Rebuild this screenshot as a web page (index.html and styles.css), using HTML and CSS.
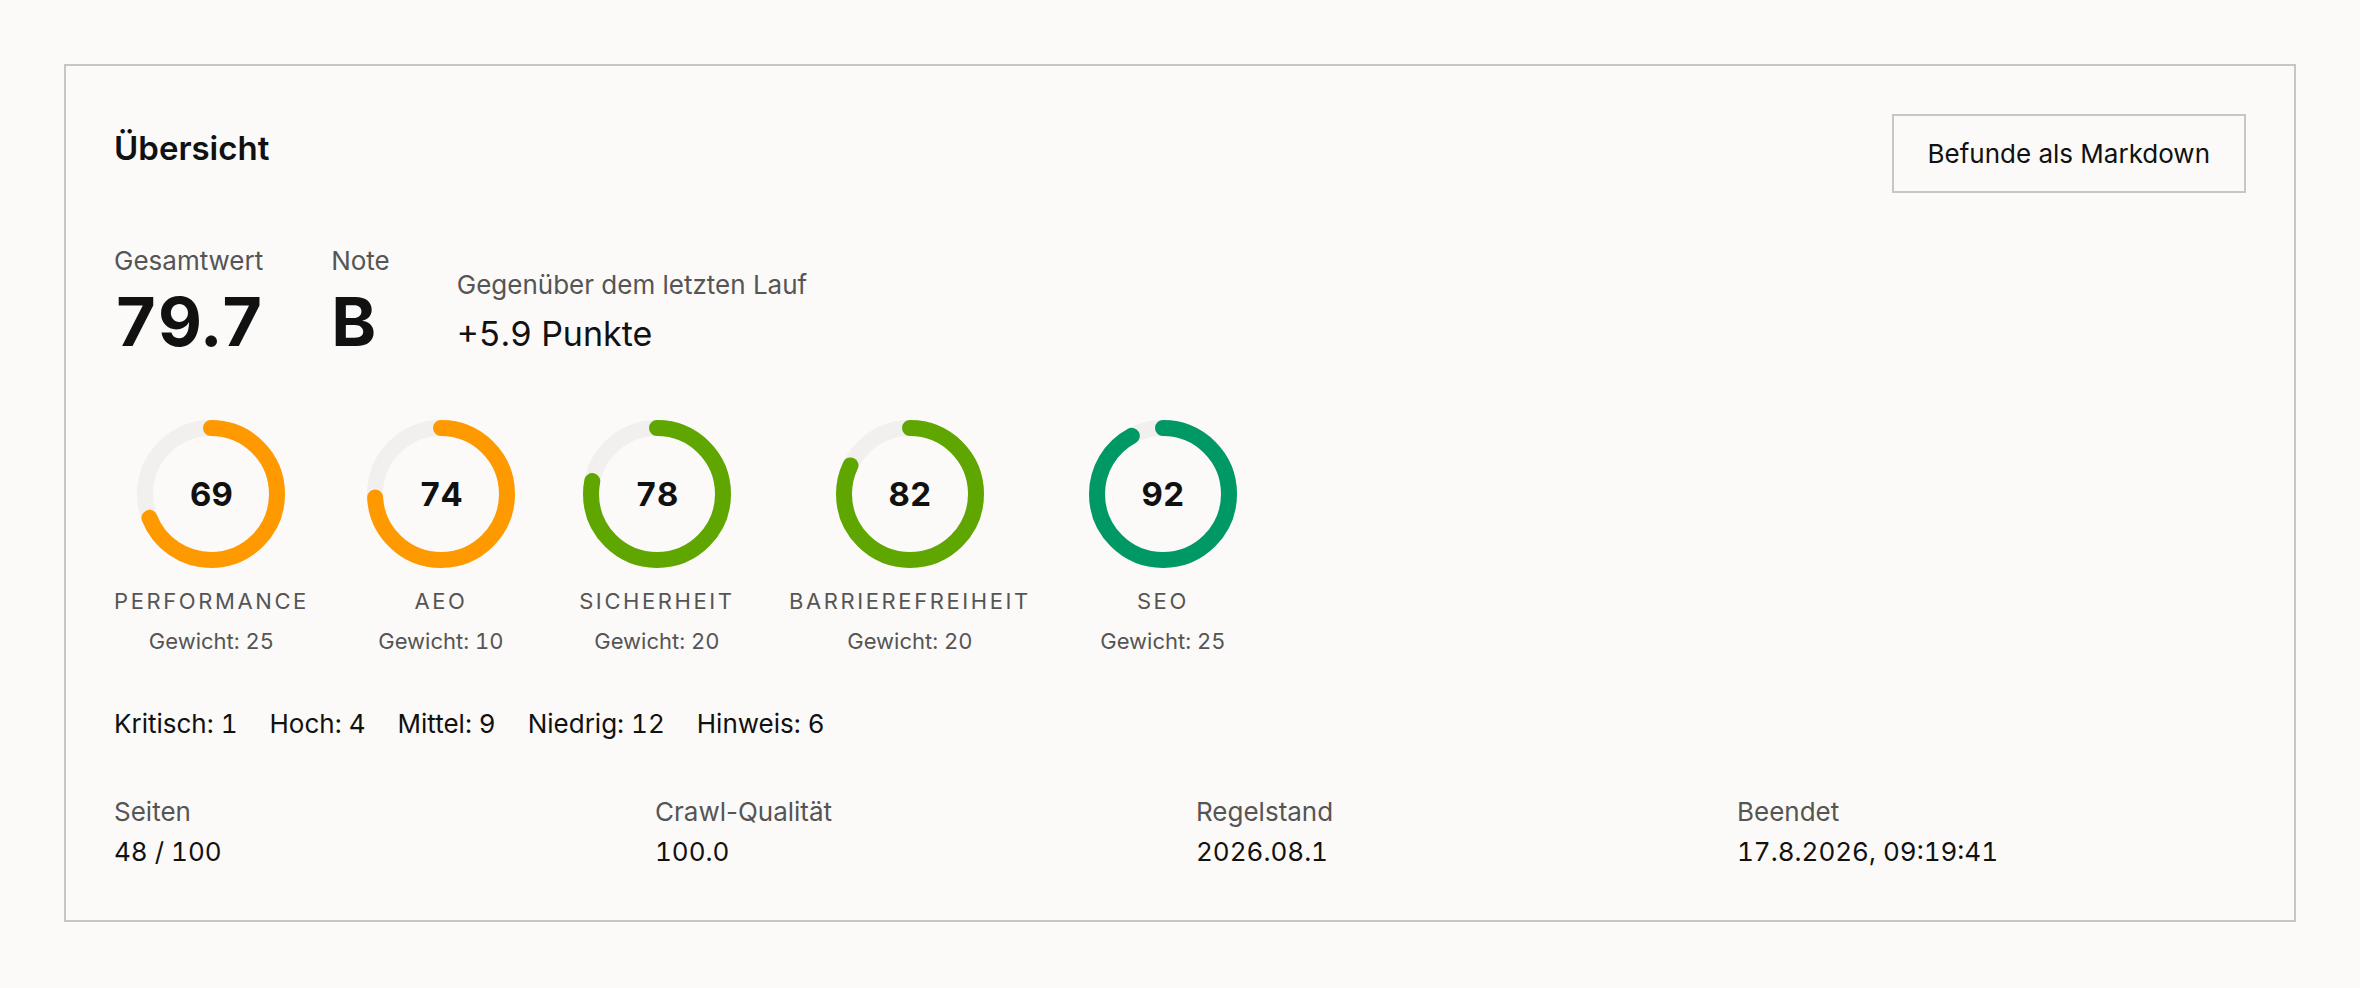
FILE: index.html
```html
<!DOCTYPE html>
<html lang="de">
<head>
    <meta charset="UTF-8">
    <meta name="viewport" content="width=device-width, initial-scale=1.0">
    <title>Übersicht</title>
    <link rel="stylesheet" href="styles.css">
</head>
<body>
    <section class="overview">
        <div class="overview-header">
            <h2 class="overview-title">Übersicht</h2>
            <button class="export-button">Befunde als Markdown</button>
        </div>

        <div class="score-row">
            <div class="score-col">
                <span class="score-label">Gesamtwert</span>
                <span class="score-value">79.7</span>
            </div>
            <div class="score-col">
                <span class="score-label">Note</span>
                <span class="score-value">B</span>
            </div>
            <div class="score-col delta">
                <span class="score-label">Gegenüber dem letzten Lauf</span>
                <span class="delta-value">+5.9 Punkte</span>
            </div>
        </div>

        <div class="gauges">
            <div class="gauge">
                <div class="gauge-ring">
                    <svg viewBox="0 0 148 148">
                        <circle class="track" cx="74" cy="74" r="66"></circle>
                        <circle class="bar orange" cx="74" cy="74" r="66" stroke-dasharray="286.1 414.7"></circle>
                    </svg>
                    <span class="gauge-value">69</span>
                </div>
                <span class="gauge-label">Performance</span>
                <span class="gauge-weight">Gewicht: 25</span>
            </div>
            <div class="gauge">
                <div class="gauge-ring">
                    <svg viewBox="0 0 148 148">
                        <circle class="track" cx="74" cy="74" r="66"></circle>
                        <circle class="bar orange" cx="74" cy="74" r="66" stroke-dasharray="306.9 414.7"></circle>
                    </svg>
                    <span class="gauge-value">74</span>
                </div>
                <span class="gauge-label">AEO</span>
                <span class="gauge-weight">Gewicht: 10</span>
            </div>
            <div class="gauge">
                <div class="gauge-ring">
                    <svg viewBox="0 0 148 148">
                        <circle class="track" cx="74" cy="74" r="66"></circle>
                        <circle class="bar green" cx="74" cy="74" r="66" stroke-dasharray="323.5 414.7"></circle>
                    </svg>
                    <span class="gauge-value">78</span>
                </div>
                <span class="gauge-label">Sicherheit</span>
                <span class="gauge-weight">Gewicht: 20</span>
            </div>
            <div class="gauge">
                <div class="gauge-ring">
                    <svg viewBox="0 0 148 148">
                        <circle class="track" cx="74" cy="74" r="66"></circle>
                        <circle class="bar green" cx="74" cy="74" r="66" stroke-dasharray="340.1 414.7"></circle>
                    </svg>
                    <span class="gauge-value">82</span>
                </div>
                <span class="gauge-label">Barrierefreiheit</span>
                <span class="gauge-weight">Gewicht: 20</span>
            </div>
            <div class="gauge">
                <div class="gauge-ring">
                    <svg viewBox="0 0 148 148">
                        <circle class="track" cx="74" cy="74" r="66"></circle>
                        <circle class="bar teal" cx="74" cy="74" r="66" stroke-dasharray="381.5 414.7"></circle>
                    </svg>
                    <span class="gauge-value">92</span>
                </div>
                <span class="gauge-label">SEO</span>
                <span class="gauge-weight">Gewicht: 25</span>
            </div>
        </div>

        <div class="severity">
            <span>Kritisch: 1</span>
            <span>Hoch: 4</span>
            <span>Mittel: 9</span>
            <span>Niedrig: 12</span>
            <span>Hinweis: 6</span>
        </div>

        <div class="meta">
            <div class="meta-item">
                <span class="meta-label">Seiten</span>
                <span class="meta-value">48 / 100</span>
            </div>
            <div class="meta-item">
                <span class="meta-label">Crawl-Qualität</span>
                <span class="meta-value">100.0</span>
            </div>
            <div class="meta-item">
                <span class="meta-label">Regelstand</span>
                <span class="meta-value">2026.08.1</span>
            </div>
            <div class="meta-item">
                <span class="meta-label">Beendet</span>
                <span class="meta-value">17.8.2026, 09:19:41</span>
            </div>
        </div>
    </section>
</body>
</html>
```

FILE: styles.css
```css
body {
    font-family: Inter, 'Liberation Sans', sans-serif;
    margin: 0;
    padding: 64px;
    background-color: #fbfaf8;
    color: #111;
}

.overview {
    border: 2px solid #c6c6c4;
    padding: 48px 48px 52px;
}

.overview-header {
    display: flex;
    justify-content: space-between;
    align-items: center;
}

.overview-title {
    margin: 0 0 12px;
    font-size: 33px;
    font-weight: 600;
    line-height: 40px;
}

.export-button {
    font-family: inherit;
    font-size: 26px;
    line-height: 31px;
    color: #111;
    background: transparent;
    border: 2px solid #c6c6c4;
    padding: 22px 34px;
    cursor: pointer;
}

.score-row {
    display: flex;
    align-items: flex-end;
    gap: 67px;
    margin-top: 53px;
}

.score-col {
    display: flex;
    flex-direction: column;
}

.score-label {
    font-size: 26px;
    line-height: 30px;
    color: #555;
}

.score-value {
    font-size: 68px;
    font-weight: 700;
    line-height: 66px;
    margin-top: 12px;
    font-variant-numeric: tabular-nums;
}

.delta-value {
    font-size: 34px;
    line-height: 40px;
    margin-top: 14px;
    font-variant-numeric: tabular-nums;
}

.gauges {
    display: flex;
    gap: 48px;
    margin-top: 66px;
}

.gauge {
    display: flex;
    flex-direction: column;
    align-items: center;
    min-width: 168px;
}

.gauge-ring {
    position: relative;
    width: 148px;
    height: 148px;
}

.gauge-ring svg {
    display: block;
    width: 148px;
    height: 148px;
    transform: rotate(-90deg);
}

.gauge-ring circle {
    fill: none;
    stroke-width: 16;
}

.track {
    stroke: #f1f0ee;
}

.bar {
    stroke-linecap: round;
}

.bar.orange {
    stroke: #ff9900;
}

.bar.green {
    stroke: #5fa600;
}

.bar.teal {
    stroke: #009865;
}

.gauge-value {
    position: absolute;
    inset: 0;
    display: flex;
    align-items: center;
    justify-content: center;
    font-size: 33px;
    font-weight: 700;
    font-variant-numeric: tabular-nums;
}

.gauge-label {
    margin-top: 19px;
    font-size: 22px;
    line-height: 28px;
    letter-spacing: 2.6px;
    text-transform: uppercase;
    color: #555;
}

.gauge-weight {
    margin-top: 12px;
    font-size: 22px;
    line-height: 28px;
    color: #555;
    font-variant-numeric: tabular-nums;
}

.severity {
    display: flex;
    gap: 32px;
    margin-top: 54px;
    font-size: 26px;
    line-height: 30px;
    font-variant-numeric: tabular-nums;
}

.meta {
    display: grid;
    grid-template-columns: repeat(4, 1fr);
    gap: 32px;
    margin-top: 57px;
}

.meta-item {
    display: flex;
    flex-direction: column;
    gap: 8px;
}

.meta-label {
    font-size: 26px;
    line-height: 32px;
    color: #555;
}

.meta-value {
    font-size: 26px;
    line-height: 32px;
    font-variant-numeric: tabular-nums;
}
```
